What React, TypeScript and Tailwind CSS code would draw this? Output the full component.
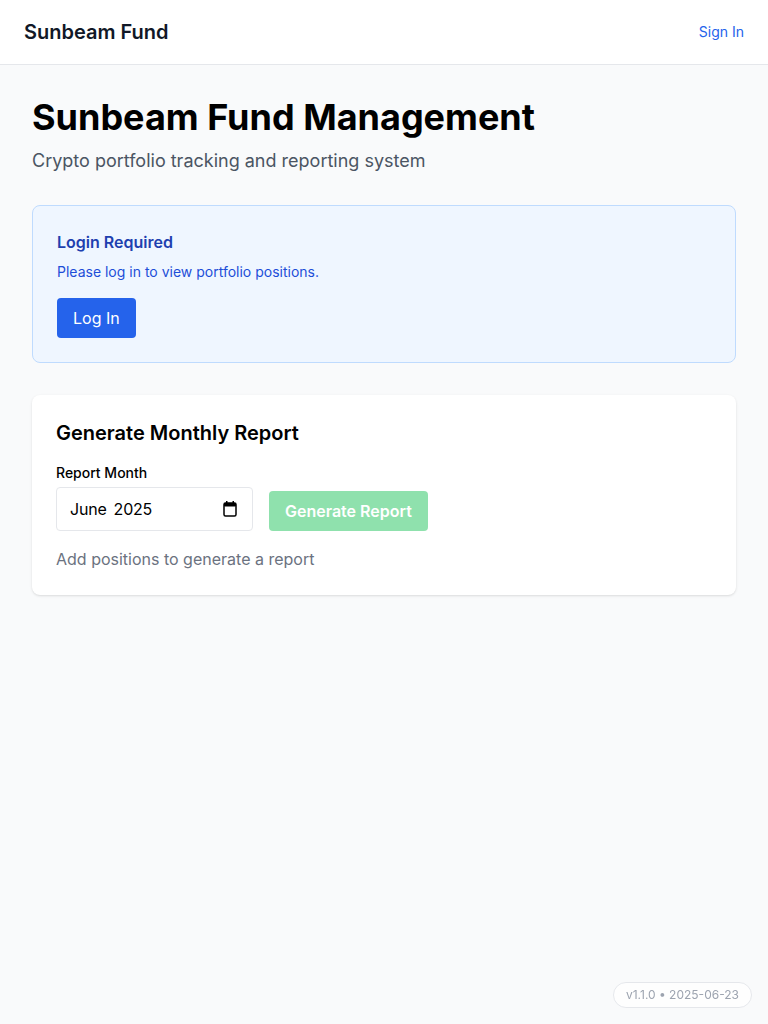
function CalendarIcon() {
  return (
    <svg width="14" height="16" viewBox="0 0 14 16" className="text-black">
      <rect x="3" y="0" width="1.5" height="3" fill="currentColor" />
      <rect x="9.5" y="0" width="1.5" height="3" fill="currentColor" />
      <rect x="1" y="2" width="12" height="13" rx="1.5" fill="none" stroke="currentColor" strokeWidth="1.5" />
      <rect x="1" y="2" width="12" height="3.5" rx="1" fill="currentColor" />
    </svg>
  )
}

export default function App() {
  return (
    <div className="min-h-screen bg-[#f9fafb] font-['Inter',sans-serif] text-[#111827]">
      <header className="h-[65px] bg-white border-b border-[#e5e7eb] px-6 flex items-center justify-between">
        <span className="text-xl font-semibold text-[#111827]">Sunbeam Fund</span>
        <a href="#" className="text-sm text-[#2563eb]">Sign In</a>
      </header>

      <main className="px-8 pt-8 pb-8">
        <h1 className="text-4xl font-bold text-black">Sunbeam Fund Management</h1>
        <p className="mt-[10px] text-lg text-[#4b5563]">Crypto portfolio tracking and reporting system</p>

        <div className="mt-[30px] bg-[#eff6ff] border border-[#bfdbfe] rounded-lg p-6">
          <h3 className="text-base font-semibold text-[#1e40af]">Login Required</h3>
          <p className="mt-2 text-sm text-[#1d4ed8]">Please log in to view portfolio positions.</p>
          <button className="mt-4 h-10 px-4 bg-[#2563eb] text-white rounded text-base">Log In</button>
        </div>

        <div className="mt-8 bg-white rounded-lg shadow p-6">
          <h2 className="text-xl font-semibold text-black">Generate Monthly Report</h2>
          <div className="mt-4 flex items-end gap-4">
            <div>
              <label className="block text-sm font-medium text-black">Report Month</label>
              <div className="mt-1 w-[197px] h-11 pl-[13px] pr-[15px] border border-[#e5e7eb] rounded flex items-center justify-between text-base text-black bg-white">
                <span className="flex gap-[7px] tracking-[-0.2px]">
                  <span>June</span>
                  <span>2025</span>
                </span>
                <CalendarIcon />
              </div>
            </div>
            <button
              disabled
              className="h-10 px-4 bg-[#22c55e] opacity-50 text-white font-semibold rounded text-base"
            >
              Generate Report
            </button>
          </div>
          <p className="mt-4 text-base text-[#6b7280]">Add positions to generate a report</p>
        </div>
      </main>

      <div className="fixed bottom-4 right-4 px-3 py-1 rounded-full border border-[#e5e7eb] bg-white/80 text-xs text-[#9ca3af]">
        v1.1.0 • 2025-06-23
      </div>
    </div>
  )
}
